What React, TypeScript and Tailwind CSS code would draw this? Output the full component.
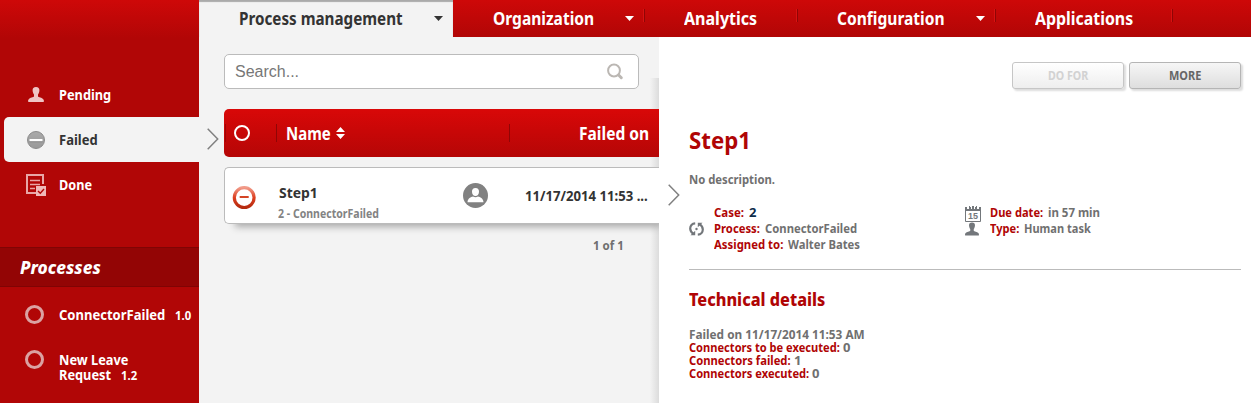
import { useLayoutEffect, useRef, useState } from 'react';
import type { ReactNode } from 'react';

function T({ w, className = '', children }: { w: number; className?: string; children: ReactNode }) {
  const ref = useRef<HTMLSpanElement>(null);
  const [k, setK] = useState(0.88);
  useLayoutEffect(() => {
    if (ref.current) setK(w / ref.current.offsetWidth);
  }, [w]);
  return (
    <span className={`inline-flex shrink-0 whitespace-nowrap ${className}`} style={{ width: w }}>
      <span ref={ref} className="inline-block shrink-0 origin-left" style={{ transform: `scaleX(${k})` }}>
        {children}
      </span>
    </span>
  );
}

function Chevron({ className }: { className: string }) {
  return (
    <svg className={`absolute h-[22px] w-[12px] ${className}`} viewBox="0 0 12 22" fill="none" stroke="#808080" strokeWidth="1.5">
      <path d="M0.7 0.7L10.7 11L0.7 21.3" />
    </svg>
  );
}

function Person({ className, fill }: { className: string; fill: string }) {
  return (
    <svg className={className} viewBox="0 0 16 15" fill={fill}>
      <path d="M8 0C5.6 0 4.5 1.3 4.6 3.4C4.7 5.2 5.3 6.5 6 7.6V9.4C5.7 10.2 1.8 10.4.7 12.2C.1 13.2 0 14 0 14.3C0 14.8.4 15 1 15H15C15.6 15 16 14.8 16 14.3C16 14 15.9 13.2 15.3 12.2C14.2 10.4 10.3 10.2 10 9.4V7.6C10.7 6.5 11.3 5.2 11.4 3.4C11.5 1.3 10.4 0 8 0Z" />
    </svg>
  );
}

function Tab({ w, label, lw, pl, caret, ml = 0 }: { w: number; label: string; lw: number; pl: number; caret?: boolean; ml?: number }) {
  return (
    <div className="flex h-full shrink-0 items-start" style={{ width: w, paddingLeft: pl }}>
      <T w={lw} className="pt-[6px] text-[18px] leading-[24px]">{label}</T>
      {caret && <svg className="mt-[16px] h-[5px] w-[9px]" style={{ marginLeft: ml }} viewBox="0 0 9 5"><path d="M0 0H9L4.5 5Z" fill="currentColor" /></svg>}
      <span className="mt-[9px] ml-auto h-[13px] w-px bg-[#8f0505] shadow-[-1px_0_0_#d81212]" />
    </div>
  );
}

function Field({ label, lw, value, vw, dark }: { label: string; lw: number; value: string; vw: number; dark?: boolean }) {
  return (
    <div className="flex h-[16px] gap-[5px]">
      <T w={lw} className="text-[#b00505]">{label}</T>
      <T w={vw} className={dark ? 'text-[#0d2c49]' : ''}>{value}</T>
    </div>
  );
}

function Sidebar() {
  return (
    <aside className="h-full w-[199px] shrink-0 bg-[#b10606] bg-[linear-gradient(#ce0808,#b10606_39px)] pt-[72px] text-[15px] text-white">
      <div className="flex h-[45px] items-center pl-[28px]">
        <Person className="h-[15px] w-[16px]" fill="#efc4c4" />
        <T w={52} className="ml-[15px]">Pending</T>
      </div>
      <div className="ml-[4px] flex h-[45px] items-center rounded-l-[5px] bg-[#f3f3f3] pl-[23px] text-[#333]">
        <svg className="h-[18px] w-[18px]" viewBox="0 0 18 18">
          <defs><linearGradient id="grey" x2="0" y2="1"><stop stopColor="#aaa" /><stop offset="1" stopColor="#999" /></linearGradient></defs>
          <circle cx="9" cy="9" r="8.5" fill="url(#grey)" stroke="#8c8c8c" />
          <path d="M2.5 10.7H15.5" stroke="#777" strokeWidth="1" />
          <rect x="2.5" y="8" width="13" height="2.3" rx=".5" fill="#fff" />
        </svg>
        <T w={39} className="ml-[14px]">Failed</T>
      </div>
      <div className="flex h-[45px] items-center pl-[26px]">
        <svg className="h-[22px] w-[20px]" viewBox="0 0 20 22" fill="none" stroke="#e8a6a6" strokeWidth="2">
          <path d="M17 10V1H1V19H10" />
          <path d="M4 6.5H14M4 10.5H14M4 14.5H9" strokeWidth="1.7" />
          <rect x="10" y="12" width="10" height="10" fill="#efb8b8" stroke="none" />
          <path d="M12 17L14.3 19.3L18 15" stroke="#b10606" strokeWidth="1.4" />
        </svg>
        <T w={33} className="ml-[13px]">Done</T>
      </div>
      <div className="mt-[40px] flex h-[40px] items-center border-y border-[#800404] bg-[#930505] pl-[20px]">
        <T w={81} className="text-[18px] font-extrabold italic">Processes</T>
      </div>
      <div className="mt-[5px] flex h-[45px] items-center pl-[25px]">
        <span className="h-[19px] w-[19px] rounded-full border-[3px] border-[#dba2a2]" />
        <T w={106} className="ml-[15px]">ConnectorFailed</T>
        <T w={16} className="ml-[10px] pt-[2px] text-[12px]">1.0</T>
      </div>
      <div className="flex pt-[13px] pl-[25px]">
        <span className="h-[19px] w-[19px] rounded-full border-[3px] border-[#dba2a2]" />
        <div className="ml-[15px] pt-[2px] leading-[15px]">
          <div><T w={69}>New Leave</T></div>
          <div className="flex"><T w={52}>Request</T><T w={16} className="ml-[10px] pt-px text-[12px]">1.2</T></div>
        </div>
      </div>
    </aside>
  );
}

function List() {
  return (
    <section className="relative h-full w-[460px] shrink-0 bg-[#f3f3f3] pt-[17px] pl-[25px]">
      <div className="absolute top-[41px] right-0 bottom-0 w-[9px] bg-linear-to-r from-transparent to-[#dcdcdc]" />
      <Chevron className="top-[91px] left-[8px]" />
      <div className="flex h-[35px] w-[415px] items-center justify-between rounded-[5px] border border-[#bbb] bg-white pr-[14px] pl-[10px]">
        <span className="font-['Liberation_Sans'] text-[16px] font-normal text-[#777]">Search...</span>
        <svg className="mb-[1px] h-[17px] w-[17px]" viewBox="0 0 17 17" fill="none" stroke="#bbb7b3">
          <circle cx="7" cy="7.5" r="5.9" strokeWidth="2" />
          <path d="M11.6 12L14.3 14.7" strokeWidth="3" strokeLinecap="round" />
        </svg>
      </div>
      <div className="relative mt-[20px] flex h-[48px] items-center rounded-l-[5px] bg-linear-to-b from-[#d90808] to-[#b50606] text-[18px] text-white">
        <span className="ml-px h-[18px] w-px bg-[#a00505]" />
        <span className="ml-[8px] h-[16px] w-[16px] rounded-full border-[2.5px] border-white" />
        <span className="ml-[26px] h-[18px] w-px bg-[#900505]" />
        <T w={45} className="ml-[9px]">Name</T>
        <svg className="ml-[5px] h-[12px] w-[9px]" viewBox="0 0 9 12" fill="#fff"><path d="M0 5H9L4.5 0ZM0 7H9L4.5 12Z" /></svg>
        <span className="ml-[164px] h-[18px] w-px bg-[#900505]" />
        <T w={70} className="ml-auto mr-[10px]">Failed on</T>
      </div>
      <div className="relative mt-[10px] flex h-[57px] rounded-l-[5px] border border-r-0 border-[#bbb] bg-white pl-[7px] text-[#333] shadow-[7px_7px_7px_-4px_#aaa] [clip-path:inset(0_0_-15px_0)]">
        <svg className="mt-[18px] h-[24px] w-[24px]" viewBox="0 0 24 24" fill="none">
          <defs><linearGradient id="ring" x2="0" y2="1"><stop stopColor="#f19a88" /><stop offset=".5" stopColor="#dd3f20" /><stop offset="1" stopColor="#b52b10" /></linearGradient></defs>
          <circle cx="12.2" cy="11.6" r="9.9" stroke="url(#ring)" strokeWidth="3.2" />
          <path d="M7.7 11H16.7" stroke="#d44526" strokeWidth="2" />
        </svg>
        <div className="ml-[22px] w-[185px] pt-[14px]">
          <div className="h-[20px] pl-px text-[15px] leading-[20px]"><T w={39}>Step1</T></div>
          <div className="h-[20px] pt-[2px] text-[12px] leading-[20px] text-[#838383]"><T w={101}>2 - ConnectorFailed</T></div>
        </div>
        <svg className="mt-[15px] h-[25px] w-[25px]" viewBox="0 0 25 25">
          <circle cx="12.5" cy="12.5" r="12.5" fill="#818181" />
          <path d="M12.5 5C9.8 5 8.8 6.8 9 9C9.2 11.5 10.5 13.1 12.5 13.1S15.8 11.5 16 9C16.2 6.8 15.2 5 12.5 5ZM4.5 19.3C4.7 15 8 14.2 10 13.5Q12.5 15 15 13.5C17 14.2 20.3 15 20.5 19.3Z" fill="#fff" />
        </svg>
        <T w={123} className="mt-[18px] ml-[37px] text-[14px] leading-[20px]">11/17/2014 11:53 ...</T>
      </div>
      <div className="flex justify-end pt-[12px] pr-[35px] text-[13px] leading-[19px] text-[#6f6f6f]"><T w={31}>1 of 1</T></div>
    </section>
  );
}

function Detail() {
  return (
    <section className="relative h-full w-[592px] bg-white pt-[25px] pr-[10px] pl-[30px] text-[13px] leading-[16px] text-[#707070]">
      <Chevron className="top-[147px] left-[9px]" />
      <div className="flex h-[27px] justify-end gap-[5px] text-[12px]">
        <button className="flex w-[112px] items-center justify-center rounded-[3px] border border-[#c6c6c6] bg-linear-to-b from-white to-[#eee] text-[#d2d2d2] shadow-[2px_2px_2px_#ddd]"><T w={40}>DO FOR</T></button>
        <button className="flex w-[112px] items-center justify-center rounded-[3px] border border-[#b5b5b5] bg-linear-to-b from-[#f6f6f6] to-[#dedede] text-[#666] shadow-[2px_2px_2px_#ddd]"><T w={32}>MORE</T></button>
      </div>
      <h1 className="mt-[35px] text-[24px] leading-[32px] font-bold text-[#b00505]"><T w={62}>Step1</T></h1>
      <p className="mt-[15px]"><T w={86}>No description.</T></p>
      <div className="mt-[17px] flex">
        <svg className="mt-[18px] h-[14px] w-[15px]" viewBox="0 0 15 14" fill="none" stroke="#73777b" strokeWidth="2.2">
          <path d="M6.2 1.3C3 1.5 1.2 4 1.2 6.5C1.2 9 2.5 10.5 4.5 11.8M8.8 12.7C12 12.5 13.8 10 13.8 7.5C13.8 5 12.5 3.5 10.5 2.2" />
          <path d="M1.5 13.3H6.2V8.7ZM13.5 .7H8.8V5.3Z" fill="#73777b" stroke="none" />
          <circle cx="7.5" cy="7" r="1.2" fill="#73777b" stroke="none" />
        </svg>
        <div className="ml-[10px] w-[251px]">
          <Field label="Case:" lw={30} value="2" vw={7} dark />
          <Field label="Process:" lw={46} value="ConnectorFailed" vw={92} />
          <Field label="Assigned to:" lw={69} value="Walter Bates" vw={72} />
        </div>
        <div className="w-[25px]">
          <svg className="mt-[2px] h-[16px] w-[16px]" viewBox="0 0 16 16">
            <path d="M.5 3.5H15.5V15.5H.5Z" fill="#fff" stroke="#73777b" />
            <path d="M0 1H2V3H4V0H5V1H6V3H7V0H9V3H10V1H11V0H12V3H14V1H16V5H0Z" fill="#73777b" />
            <text x="8" y="13.3" textAnchor="middle" fontSize="9" fontWeight="700" fill="#73777b" fontFamily="Liberation Sans">15</text>
          </svg>
          <Person className="h-[14px] w-[14px]" fill="#73777b" />
        </div>
        <div>
          <Field label="Due date:" lw={53} value="in 57 min" vw={52} />
          <Field label="Type:" lw={29} value="Human task" vw={67} />
        </div>
      </div>
      <hr className="mt-[17px] border-[#bbb]" />
      <h2 className="mt-[17px] text-[18px] leading-[24px] font-extrabold text-[#b00505]"><T w={136}>Technical details</T></h2>
      <div className="mt-[17px] flex flex-col leading-[13px]">
        <T w={176}>Failed on 11/17/2014 11:53 AM</T>
        <div className="flex gap-[3px]"><T w={151} className="text-[#b00505]">Connectors to be executed:</T><T w={7}>0</T></div>
        <div className="flex gap-[3px]"><T w={102} className="text-[#b00505]">Connectors failed:</T><T w={7}>1</T></div>
        <div className="flex gap-[3px]"><T w={120} className="text-[#b00505]">Connectors executed:</T><T w={7}>0</T></div>
      </div>
    </section>
  );
}

export default function App() {
  return (
    <div className="flex h-[403px] w-[1251px] overflow-hidden font-['Noto_Sans',sans-serif] font-bold">
      <Sidebar />
      <div className="flex min-w-0 flex-1 flex-col">
        <nav className="flex h-[37px] shrink-0 bg-linear-to-b from-[#ce0808] to-[#b10606] text-white">
          <div className="flex h-full w-[254px] items-start bg-[#f3f3f3] pl-[40px] text-[#333] shadow-[inset_0_2px_1px_#aaa]">
            <T w={164} className="pt-[6px] text-[18px] leading-[24px]">Process management</T>
            <svg className="mt-[16px] ml-[31px] h-[5px] w-[9px]" viewBox="0 0 9 5"><path d="M0 0H9L4.5 5Z" fill="currentColor" /></svg>
          </div>
          <Tab w={192} label="Organization" lw={101} pl={40} caret ml={31} />
          <Tab w={153} label="Analytics" lw={73} pl={39} />
          <Tab w={198} label="Configuration" lw={108} pl={39} caret ml={31} />
          <Tab w={177} label="Applications" lw={98} pl={39} />
        </nav>
        <div className="flex min-h-0 flex-1">
          <List />
          <Detail />
        </div>
      </div>
    </div>
  );
}
